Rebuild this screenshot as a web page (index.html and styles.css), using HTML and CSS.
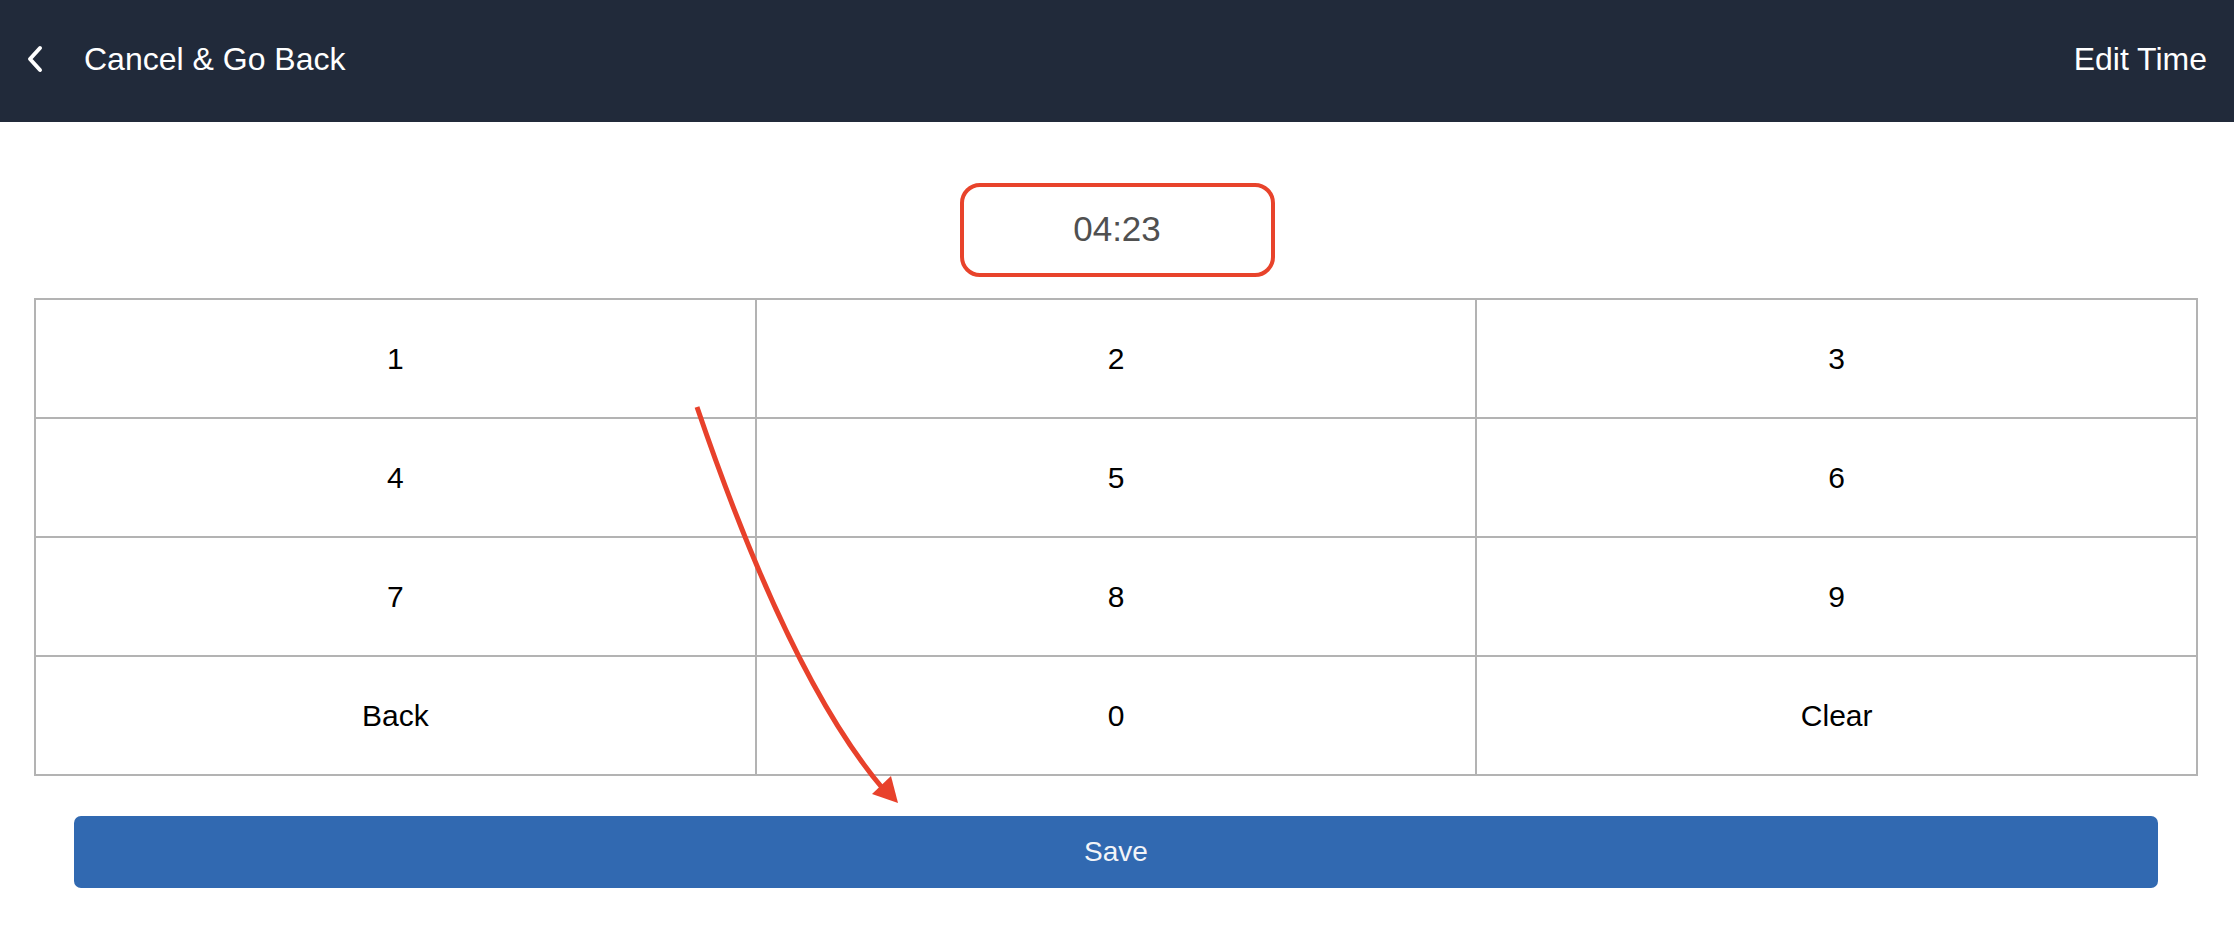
FILE: index.html
```html
<!DOCTYPE html>
<html>
<head>
<meta charset="utf-8">
<title>Edit Time</title>
<link rel="stylesheet" href="styles.css">
</head>
<body>
<header class="topbar">
  <div class="back-link">
    <svg class="chev" width="18" height="28" viewBox="0 0 18 28"><path d="M14 3 L4 14 L14 25" fill="none" stroke="#fff" stroke-width="4" stroke-linecap="round" stroke-linejoin="round"/></svg>
    <span class="back-text">Cancel &amp; Go Back</span>
  </div>
  <div class="title">Edit Time</div>
</header>
<main class="content">
  <div class="time-row">
    <div class="time-box">04:23</div>
  </div>
  <div class="keypad">
    <div class="key">1</div>
    <div class="key">2</div>
    <div class="key">3</div>
    <div class="key">4</div>
    <div class="key">5</div>
    <div class="key">6</div>
    <div class="key">7</div>
    <div class="key">8</div>
    <div class="key">9</div>
    <div class="key">Back</div>
    <div class="key">0</div>
    <div class="key">Clear</div>
  </div>
  <div class="save-row">
    <button class="save">Save</button>
  </div>
</main>
<svg class="annot" width="2234" height="942" viewBox="0 0 2234 942">
  <path d="M697 407 Q 790 680 884 790" fill="none" stroke="#e8412b" stroke-width="5"/>
  <polygon points="898,803 872,794 891,776" fill="#e8412b"/>
</svg>
</body>
</html>
```
FILE: styles.css
```css
* { box-sizing: border-box; }
html, body { margin: 0; padding: 0; background: #fff; }
body {
  font-family: "Liberation Sans", Arial, sans-serif;
  width: 2234px;
  height: 942px;
  position: relative;
  overflow: hidden;
}
.topbar {
  height: 122px;
  background: #212a3a;
  color: #fff;
  display: flex;
  align-items: center;
  justify-content: space-between;
  padding: 0 27px 4px 26px;
}
.back-link {
  display: flex;
  align-items: center;
}
.chev { display: block; }
.back-text {
  margin-left: 40px;
  font-size: 32px;
}
.title {
  font-size: 32px;
}
.content {
  display: flex;
  flex-direction: column;
}
.time-row {
  display: flex;
  justify-content: center;
  margin-top: 61px;
}
.time-box {
  width: 315px;
  height: 94px;
  border: 4px solid #e8432b;
  border-radius: 20px;
  display: flex;
  align-items: center;
  justify-content: center;
  font-size: 35px;
  color: #505050;
  padding-bottom: 2px;
}
.keypad {
  margin: 21px 36px 0 34px;
  display: grid;
  grid-template-columns: repeat(3, 1fr);
  grid-auto-rows: 117px;
  gap: 2px;
  padding: 2px;
  background: #b3b3b3;
}
.key {
  background: #fff;
  display: flex;
  align-items: center;
  justify-content: center;
  font-size: 30px;
  color: #000;
}
.save-row {
  margin: 40px 76px 0 74px;
}
.save {
  width: 100%;
  height: 72px;
  border: none;
  border-radius: 7px;
  background: #3169b1;
  color: #f2f4f8;
  font-family: "Liberation Sans", Arial, sans-serif;
  font-size: 28px;
  display: block;
}
.annot {
  position: absolute;
  left: 0;
  top: 0;
  pointer-events: none;
}
```
